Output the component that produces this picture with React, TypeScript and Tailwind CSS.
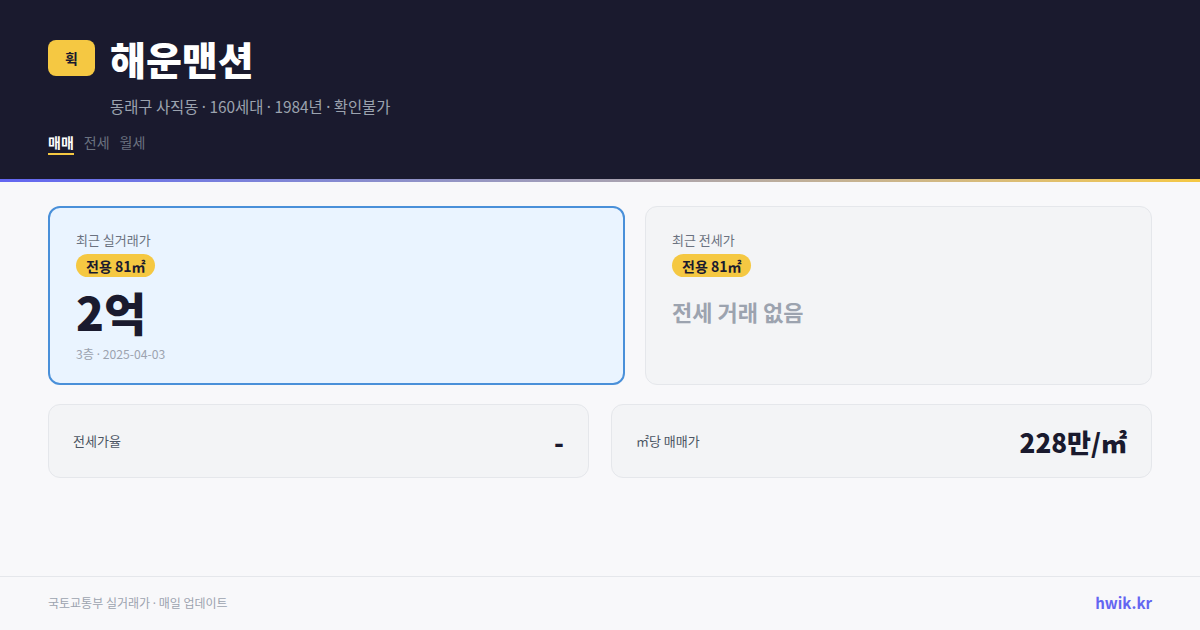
import React from "react";

const font = { fontFamily: '"Noto Sans CJK KR", "Noto Sans", sans-serif' };

const Dot = () => <span style={{ fontFamily: '"Noto Sans", sans-serif' }}>·</span>;

const SizeBadge = () => (
  <span className="inline-flex items-center h-[23px] px-[10px] rounded-full bg-[#f5c842] text-[14px] font-bold text-[#1a1a2e] leading-none">
    전용 81㎡
  </span>
);

export default function App() {
  return (
    <div className="w-[1200px] h-[630px] bg-[#f8f8fa] flex flex-col overflow-hidden" style={font}>
      <header className="bg-[#1a1a2e] h-[179px] px-[48px] pt-[38px]">
        <div className="flex items-center gap-[15px]">
          <div className="w-[47px] h-[36px] rounded-[8px] bg-[#f5c842] flex items-center justify-center text-[14px] font-bold text-[#1a1a2e]">
            휙
          </div>
          <h1 className="text-[39px] font-black text-white leading-[40px]">해운맨션</h1>
        </div>
        <p className="ml-[62px] mt-[17px] text-[15.4px] text-[#9ca3af] leading-[22px]">
          동래구 사직동 <Dot /> 160세대 <Dot /> 1984년 <Dot /> 확인불가
        </p>
        <nav className="flex gap-[10px] mt-[13px] text-[14px] leading-[20px]">
          <span className="text-white font-bold border-b-2 border-[#f5c842] pb-[1px]">매매</span>
          <span className="text-[#6b7280]">전세</span>
          <span className="text-[#6b7280]">월세</span>
        </nav>
      </header>
      <div className="h-[3px] bg-gradient-to-r from-[#6366f1] to-[#f5c842]" />

      <main className="flex-1 px-[48px] pt-[24px]">
        <div className="flex gap-[20px]">
          <div className="w-[577px] h-[179px] rounded-[12px] border-2 border-[#4a90d9] bg-[#eaf4ff] pl-[26px] pt-[23px]">
            <div className="text-[13px] text-[#6b7280] leading-[18px]">최근 실거래가</div>
            <div className="mt-[5px] flex"><SizeBadge /></div>
            <div className="text-[46px] font-black text-[#1a1a2e] leading-[52px] mt-[8px]">2억</div>
            <div className="text-[12.2px] text-[#9ca3af] leading-[18px] mt-[8px]">
              3층 <Dot /> 2025-04-03
            </div>
          </div>
          <div className="flex-1 h-[179px] rounded-[12px] border border-[#e5e7eb] bg-[#f3f4f6] pl-[26px] pt-[24px]">
            <div className="text-[13px] text-[#6b7280] leading-[18px]">최근 전세가</div>
            <div className="mt-[5px] flex"><SizeBadge /></div>
            <div className="text-[22px] font-bold text-[#9ca3af] leading-[30px] mt-[19px]">전세 거래 없음</div>
          </div>
        </div>

        <div className="flex gap-[22px] mt-[19px]">
          <div className="flex-1 h-[74px] rounded-[12px] border border-[#e5e7eb] bg-[#f3f4f6] px-[24px] flex items-center justify-between">
            <span className="text-[13px] text-[#4b5563]">전세가율</span>
            <span className="text-[26px] font-black text-[#1a1a2e]">-</span>
          </div>
          <div className="flex-1 h-[74px] rounded-[12px] border border-[#e5e7eb] bg-[#f3f4f6] px-[24px] flex items-center justify-between">
            <span className="text-[13px] text-[#4b5563]">㎡당 매매가</span>
            <span className="text-[26px] font-black text-[#1a1a2e]">228만/㎡</span>
          </div>
        </div>
      </main>

      <footer className="h-[54px] border-t border-[#e5e7eb] px-[48px] flex items-center justify-between">
        <span className="text-[12px] text-[#9ca3af]">
          국토교통부 실거래가 <Dot /> 매일 업데이트
        </span>
        <span className="text-[15px] font-bold text-[#6366f1]">hwik.kr</span>
      </footer>
    </div>
  );
}
